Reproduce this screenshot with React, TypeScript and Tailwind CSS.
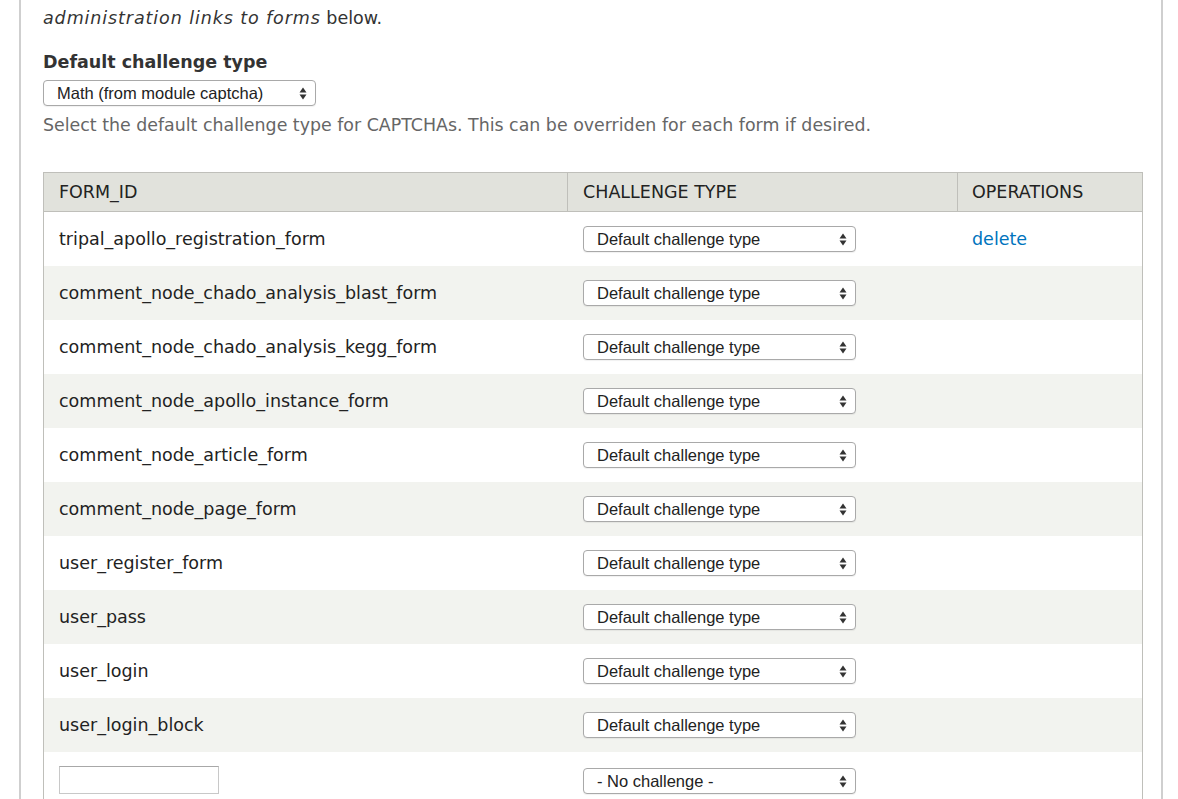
import React from "react";

const rows = [
  "tripal_apollo_registration_form",
  "comment_node_chado_analysis_blast_form",
  "comment_node_chado_analysis_kegg_form",
  "comment_node_apollo_instance_form",
  "comment_node_article_form",
  "comment_node_page_form",
  "user_register_form",
  "user_pass",
  "user_login",
  "user_login_block",
];

const ui = { fontFamily: '"DejaVu Sans", "Lucida Grande", sans-serif' };
const sel = { fontFamily: '"Liberation Sans", Arial, sans-serif' };

function Arrows() {
  return (
    <svg width="8" height="13" viewBox="0 0 8 13" className="shrink-0">
      <path d="M4 0.5 L7.5 5.5 H0.5 Z" fill="#333" />
      <path d="M4 12.5 L7.5 7.5 H0.5 Z" fill="#333" />
    </svg>
  );
}

function Select({ label, className }: { label: string; className: string }) {
  return (
    <div
      style={sel}
      className={`flex h-[26px] items-center justify-between rounded-[4px] border border-[#a9a9a9] bg-white pr-[8px] text-[16.5px] text-[#222] shadow-[0_1px_1px_rgba(0,0,0,0.06)] ${className}`}
    >
      <span>{label}</span>
      <Arrows />
    </div>
  );
}

export default function App() {
  return (
    <div className="h-[799px] w-full overflow-hidden bg-white" style={ui}>
      <div className="ml-[19px] h-[799px] w-[1144px] border-x-2 border-[#cfcfcf] pl-[22px]">
        <div className="pt-[6px] text-[17.5px] leading-[24px] text-[#333]">
          <em className="tracking-[0.9px]">administration links to forms</em> below.
        </div>
        <div className="mt-[20px] text-[17.5px] font-bold leading-[24px] text-[#333]">
          Default challenge type
        </div>
        <Select label="Math (from module captcha)" className="mt-[6px] w-[273px] pl-[13px]" />
        <div className="mt-[7px] text-[17.4px] leading-[24px] text-[#666]">
          Select the default challenge type for CAPTCHAs. This can be overriden for each form if desired.
        </div>
        <div className="mt-[35px] w-[1100px] border border-b-0 border-[#bfbfba]">
          <div className="flex h-[39px] border-b border-[#bfbfba] bg-[#e1e2dc] text-[17.5px] text-[#222]">
            <div className="flex w-[524px] items-center border-r border-[#bfbfba] pl-[15px]">FORM_ID</div>
            <div className="flex w-[390px] items-center border-r border-[#bfbfba] pl-[15px]">CHALLENGE TYPE</div>
            <div className="flex flex-1 items-center pl-[14px]">OPERATIONS</div>
          </div>
          {rows.map((r, i) => (
            <div
              key={r}
              className={`flex h-[54px] items-center text-[17.5px] text-[#222] ${i % 2 === 1 ? "bg-[#f2f3ef]" : "bg-white"}`}
            >
              <div className="w-[524px] pl-[15px]">{r}</div>
              <div className="w-[390px] pl-[15px]">
                <Select label="Default challenge type" className="w-[273px] pl-[13px]" />
              </div>
              <div className="flex-1 pl-[14px]">
                {i === 0 && <a className="text-[#0074bd]">delete</a>}
              </div>
            </div>
          ))}
          <div className="flex h-[60px] items-start bg-white pt-[14px]">
            <div className="w-[524px] pl-[15px]">
              <div className="h-[28px] w-[160px] border border-[#c8c8c8] border-t-[#a8a8a8] bg-white" />
            </div>
            <div className="w-[390px] pl-[15px] pt-[2px]">
              <Select label="- No challenge -" className="w-[273px] pl-[13px]" />
            </div>
          </div>
        </div>
      </div>
    </div>
  );
}
